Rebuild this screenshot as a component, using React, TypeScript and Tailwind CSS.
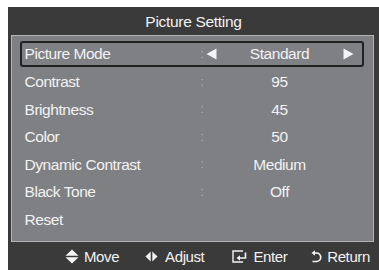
import React from 'react';

// Picture Setting menu (TV OSD)
interface Row {
  label: string;
  value?: string;
  selected?: boolean;
}

const rows: Row[] = [
  { label: 'Picture Mode', value: 'Standard', selected: true },
  { label: 'Contrast', value: '95' },
  { label: 'Brightness', value: '45' },
  { label: 'Color', value: '50' },
  { label: 'Dynamic Contrast', value: 'Medium' },
  { label: 'Black Tone', value: 'Off' },
  { label: 'Reset' },
];

function MoveIcon() {
  return (
    <svg width="14" height="15" viewBox="0 0 14 15" className="shrink-0">
      <path d="M7 0.5 L13.5 6.7 H0.5 Z" fill="#f2f2f2" />
      <path d="M0.5 8.3 H13.5 L7 14.5 Z" fill="#f2f2f2" />
    </svg>
  );
}

function AdjustIcon() {
  return (
    <svg width="13" height="11" viewBox="0 0 13 11" className="shrink-0">
      <path d="M5.7 0.5 V10.5 L0.5 5.5 Z" fill="#f2f2f2" />
      <path d="M7.3 0.5 V10.5 L12.5 5.5 Z" fill="#f2f2f2" />
    </svg>
  );
}

function EnterIcon() {
  return (
    <svg width="16" height="13" viewBox="0 0 16 13" className="shrink-0">
      <path d="M11 1 H1 V12 H11" fill="none" stroke="#f2f2f2" strokeWidth="1.4" />
      <path d="M13.5 2.5 V8 H6.5" fill="none" stroke="#f2f2f2" strokeWidth="1.6" />
      <path d="M4.5 8 L8 5.3 V10.7 Z" fill="#f2f2f2" />
    </svg>
  );
}

function ReturnIcon() {
  return (
    <svg width="11" height="13" viewBox="0 0 11 13" className="shrink-0">
      <path d="M3 3 H5.5 A4 4 0 0 1 5.5 11.5 H1.5" fill="none" stroke="#f2f2f2" strokeWidth="1.7" />
      <path d="M0.5 3 L4 0.3 V5.7 Z" fill="#f2f2f2" />
    </svg>
  );
}

function Arrow({ dir }: { dir: 'left' | 'right' }) {
  return (
    <svg width="11" height="12" viewBox="0 0 11 12" className="shrink-0">
      {dir === 'left' ? (
        <path d="M10.5 0.5 V11.5 L0.5 6 Z" fill="#f2f2f2" />
      ) : (
        <path d="M0.5 0.5 V11.5 L10.5 6 Z" fill="#f2f2f2" />
      )}
    </svg>
  );
}

export default function App() {
  return (
    <div
      className="w-[379px] h-[270px] bg-white pl-[8px] pt-[7px] overflow-hidden text-[#f2f2f2]"
      style={{ fontFamily: '"Liberation Sans", Arial, sans-serif' }}
    >
      <div className="flex h-full flex-col bg-[#3a3a3a]">
        {/* Title */}
        <div className="flex h-[28px] items-center justify-center text-[15.5px] leading-none tracking-[-0.3px] pt-[1px]">
          Picture Setting
        </div>

        {/* Menu panel */}
        <div className="ml-[3px] mr-[5px] h-[207px] border-[1.5px] border-[#b4b4b6] bg-[#7f8084] pl-[7.5px] pt-[4.5px]">
          {rows.map((row) => (
            <div
              key={row.label}
              className={
                row.selected
                  ? 'flex h-[26px] w-[344px] items-center rounded-[3px] border-2 border-[#202020] pl-[3px] mb-[1.5px]'
                  : 'flex h-[27.5px] w-[344px] items-center border-2 border-transparent pl-[3px]'
              }
            >
              <span className="w-[176px] text-[15.5px] leading-none tracking-[-0.45px]">{row.label}</span>
              {row.value && (
                <>
                  <span className="w-[5px] text-[12px] leading-none text-[#aeb0b3]">:</span>
                  <div className="flex w-[148px] items-center">
                    <span className="flex w-[12px] justify-start">{row.selected && <Arrow dir="left" />}</span>
                    <span className="flex-1 text-center text-[15.5px] leading-none tracking-[-0.45px]">{row.value}</span>
                    <span className="flex w-[12px] justify-end">{row.selected && <Arrow dir="right" />}</span>
                  </div>
                </>
              )}
            </div>
          ))}
        </div>

        {/* Footer */}
        <div className="flex flex-1 items-center pl-[57px] text-[15px] leading-none tracking-[-0.4px]">
          <div className="flex items-center gap-[5px]">
            <MoveIcon />
            <span>Move</span>
          </div>
          <div className="ml-[26px] flex items-center gap-[7px]">
            <AdjustIcon />
            <span>Adjust</span>
          </div>
          <div className="ml-[28px] flex items-center gap-[5px]">
            <EnterIcon />
            <span>Enter</span>
          </div>
          <div className="ml-[24px] flex items-center gap-[5px]">
            <ReturnIcon />
            <span>Return</span>
          </div>
        </div>
      </div>
    </div>
  );
}
